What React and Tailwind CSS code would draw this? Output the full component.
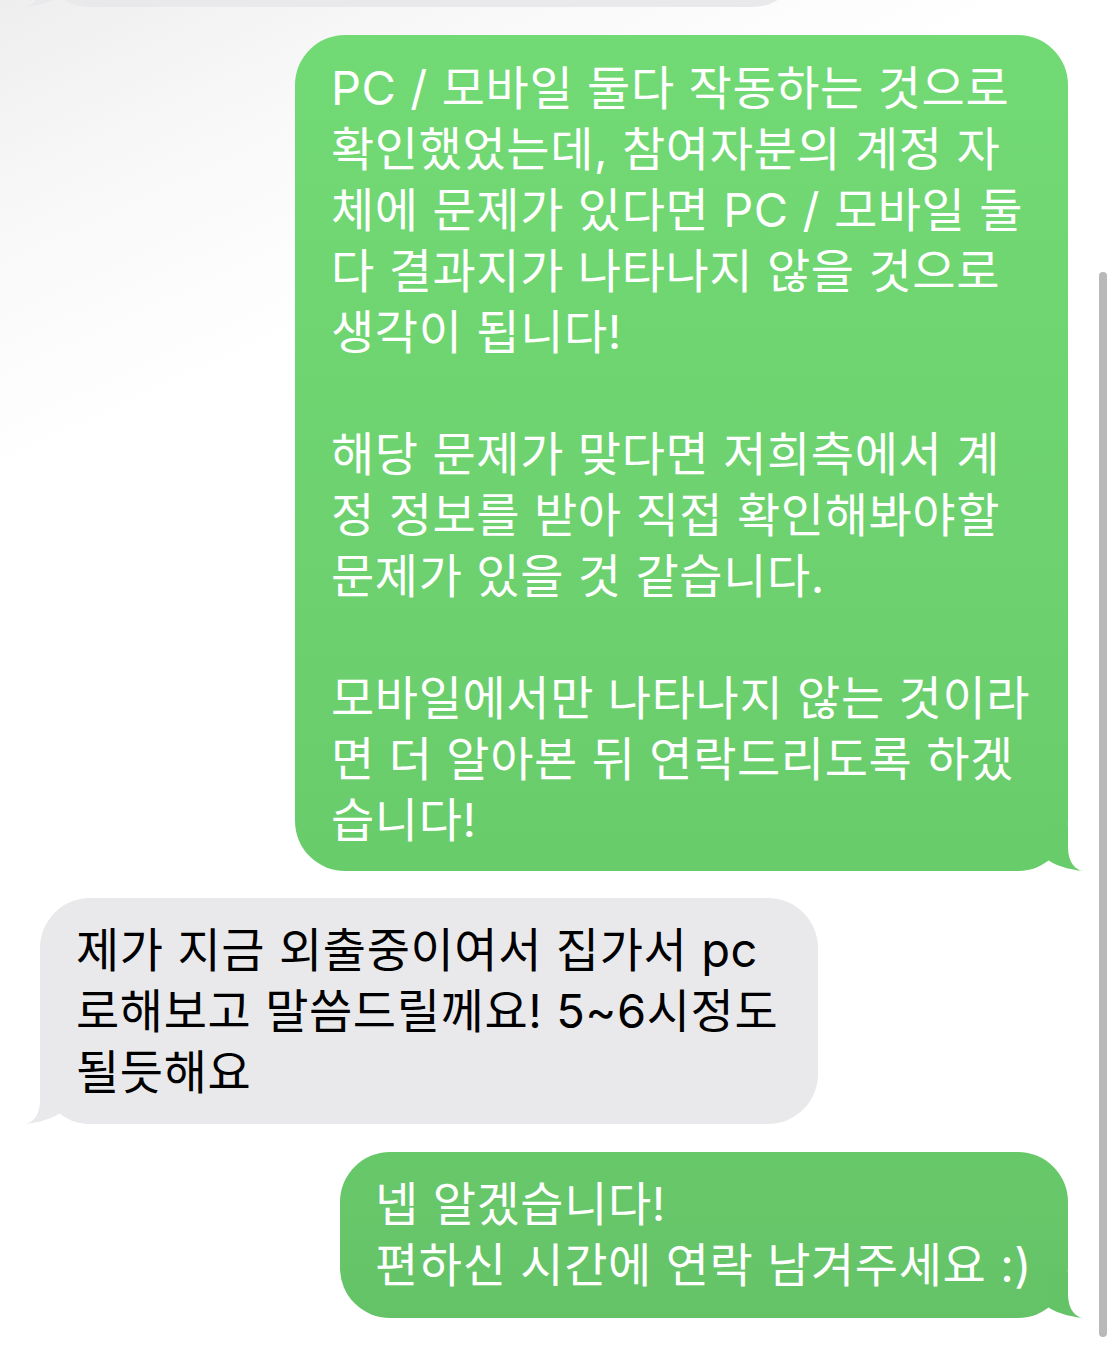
import React from "react";

const FONT = { fontFamily: 'Inter, "Noto Sans CJK KR", sans-serif' };

function Tail({ side, color }) {
  const cls =
    side === "right"
      ? "absolute bottom-0 right-[-17px] w-[42px] h-[46px] overflow-visible"
      : "absolute bottom-0 left-[-17px] w-[42px] h-[46px] overflow-visible scale-x-[-1]";
  return (
    <svg className={cls} viewBox="0 0 42 46" aria-hidden="true">
      <path
        d="M25 0 L25 22 C25 38 33 46 42 46 C34 46 14 42 5 35 L5 0 Z"
        fill={color}
      />
    </svg>
  );
}

function Lines({ lines }) {
  return lines.map((l, i) => (
    <div key={i} className="h-[61px] leading-[61px] whitespace-pre">
      {l === "" ? "\u00a0" : l}
    </div>
  ));
}

export default function App() {
  const green1 = [
    "PC / 모바일 둘다 작동하는 것으로",
    "확인했었는데, 참여자분의 계정 자",
    "체에 문제가 있다면 PC / 모바일 둘",
    "다 결과지가 나타나지 않을 것으로",
    "생각이 됩니다!",
    "",
    "해당 문제가 맞다면 저희측에서 계",
    "정 정보를 받아 직접 확인해봐야할",
    "문제가 있을 것 같습니다.",
    "",
    "모바일에서만 나타나지 않는 것이라",
    "면 더 알아본 뒤 연락드리도록 하겠",
    "습니다!",
  ];
  const gray = [
    "제가 지금 외출중이여서 집가서 pc",
    "로해보고 말씀드릴께요! 5~6시정도",
    "될듯해요",
  ];
  const green2 = ["넵 알겠습니다!", "편하신 시간에 연락 남겨주세요 :)"];

  return (
    <div
      className="relative w-[1108px] h-[1350px] overflow-hidden bg-[linear-gradient(155deg,#eeeeee_0%,#f8f8f8_12%,#ffffff_26%)] text-[47px] tracking-[0.6px]"
      style={FONT}
    >
      <div className="flex flex-col px-[40px]">
        {/* previous gray bubble, mostly scrolled out */}
        <div className="relative self-start mt-[-93px] h-[100px] w-[762px] rounded-[50px] bg-[#e9e9eb]">
          <Tail side="left" color="#e9e9eb" />
        </div>

        {/* green bubble 1 */}
        <div className="relative self-end mt-[28px] w-[773px] rounded-[50px] bg-[linear-gradient(180deg,#72da74,#69cc6b)] pl-[36px] pt-[22px] pb-[21px] text-white">
          <Lines lines={green1} />
          <Tail side="right" color="#69cc6b" />
        </div>

        {/* gray bubble */}
        <div className="relative self-start mt-[27px] w-[778px] rounded-[50px] bg-[#e9e9eb] pl-[36px] pt-[21px] pb-[22px] text-black">
          <Lines lines={gray} />
          <Tail side="left" color="#e9e9eb" />
        </div>

        {/* green bubble 2 */}
        <div className="relative self-end mt-[28px] w-[728px] rounded-[50px] bg-[linear-gradient(180deg,#67c86a,#65c367)] pl-[35px] pt-[21px] pb-[23px] text-white">
          <Lines lines={green2} />
          <Tail side="right" color="#65c367" />
        </div>
      </div>

      {/* scroll indicator */}
      <div className="absolute left-[1099px] top-[272px] w-[8px] h-[1065px] rounded-full bg-[#b9b9b9]" />
    </div>
  );
}
